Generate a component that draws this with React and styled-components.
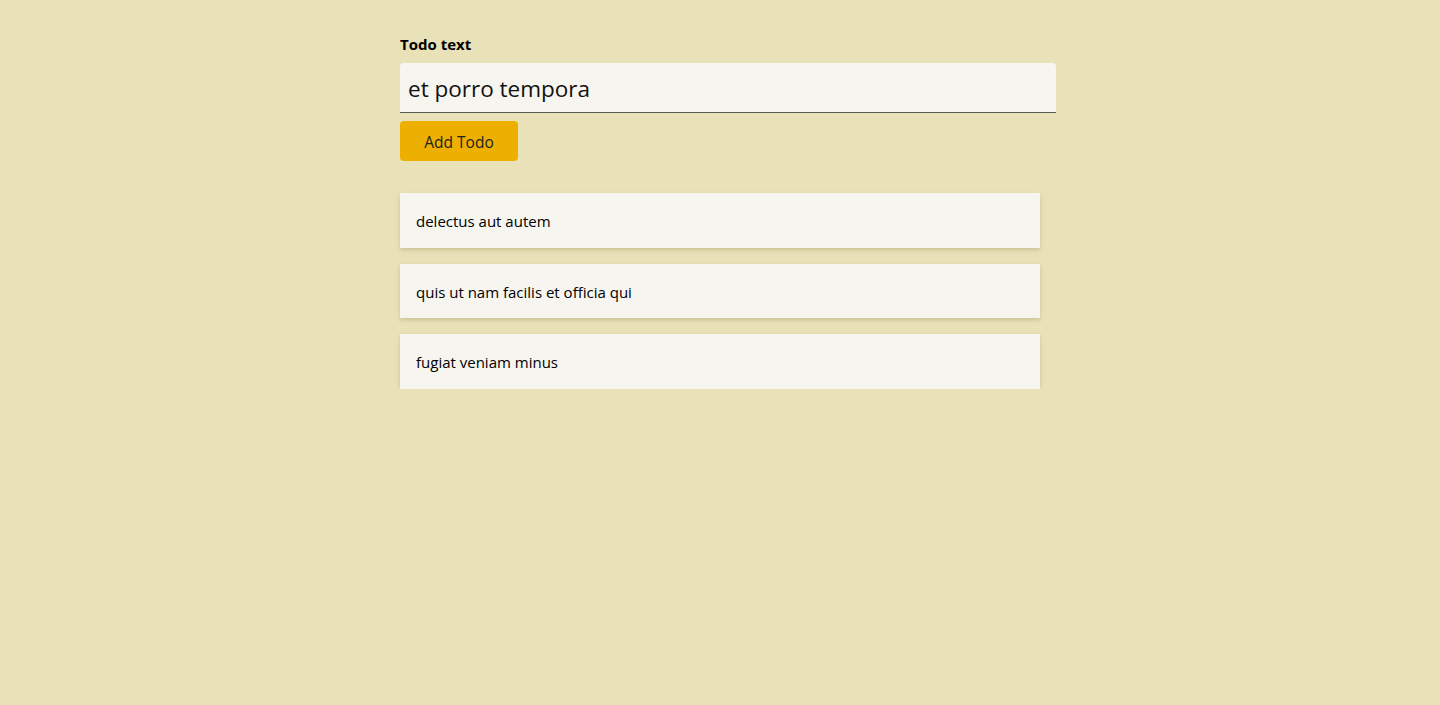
import React, { useState } from 'react';
import styled, { createGlobalStyle } from 'styled-components';

const GlobalStyle = createGlobalStyle`
    body {
        margin: 0;
        background: #e9e2b8;
        font-family: "Open Sans", "Noto Sans", sans-serif;
        color: #000;
    }
`;

const Page = styled.div`
    width: 656px;
    margin-left: calc(50% - 320px);
    padding-top: 34px;
`;

const Label = styled.label`
    display: block;
    font-size: 15px;
    font-weight: 700;
    line-height: 20px;
    margin-bottom: 9px;
`;

const Input = styled.input`
    display: block;
    box-sizing: border-box;
    width: 100%;
    height: 50px;
    padding: 2px 8px 0;
    border: none;
    border-bottom: 1px solid #5a5a55;
    border-radius: 4px 4px 0 0;
    background: #f6f5f0;
    font-family: inherit;
    font-size: 22.5px;
    color: #111;
    outline: none;
`;

const Button = styled.button`
    display: block;
    margin-top: 8px;
    width: 118px;
    height: 40px;
    padding: 2px 0 0;
    border: none;
    border-radius: 4px;
    background: #eeb000;
    font-family: inherit;
    font-size: 15.5px;
    color: #222;
    cursor: pointer;
`;

const List = styled.ul`
    list-style: none;
    margin: 32px 0 0;
    padding: 0;
    width: 640px;
    display: flex;
    flex-direction: column;
    gap: 16px;
`;

const Item = styled.li`
    box-sizing: border-box;
    height: 54.6px;
    padding: 2px 16px 0;
    display: flex;
    align-items: center;
    background: #f6f5f0;
    font-size: 15px;
    box-shadow: 0 2px 4px rgba(120, 105, 40, 0.25);
`;

export default function App() {
    const [text, setText] = useState('et porro tempora');
    const [todos, setTodos] = useState([
        'delectus aut autem',
        'quis ut nam facilis et officia qui',
        'fugiat veniam minus',
    ]);

    const addTodo = () => {
        if (!text.trim()) return;
        setTodos([...todos, text]);
        setText('');
    };

    return (
        <>
            <GlobalStyle />
            <Page>
                <Label htmlFor="todo">Todo text</Label>
                <Input id="todo" value={text} onChange={e => setText(e.target.value)} />
                <Button onClick={addTodo}>Add Todo</Button>
                <List>
                    {todos.map((t, i) => <Item key={i}>{t}</Item>)}
                </List>
            </Page>
        </>
    );
}
